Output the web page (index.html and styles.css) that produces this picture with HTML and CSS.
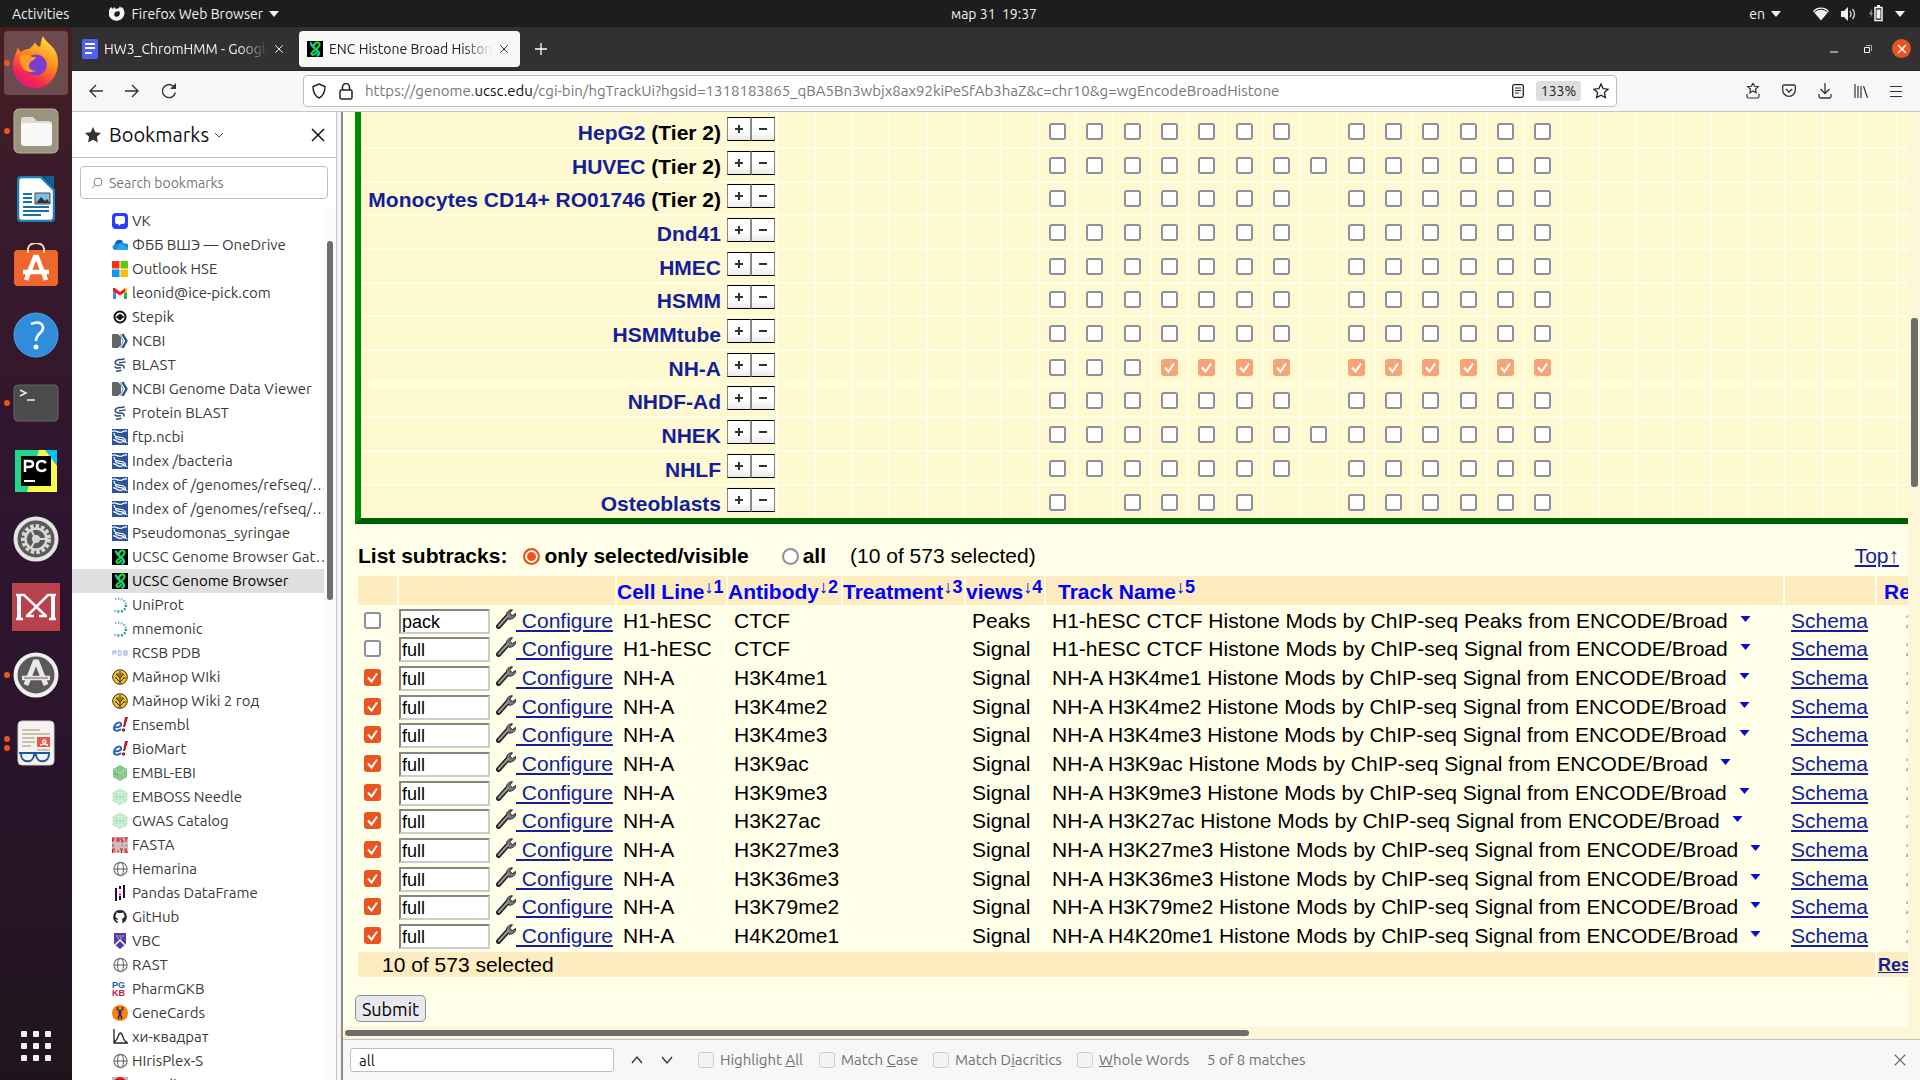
FILE: index.html
```html
<!DOCTYPE html>
<html lang="en">
<head>
<meta charset="utf-8">
<title>ENC Histone Broad Histone</title>
<link rel="stylesheet" href="styles.css">
</head>
<body>
<svg class="sprite" aria-hidden="true">
  <symbol id="i-x" viewBox="0 0 16 16"><path d="M2 2 14 14M14 2 2 14" fill="none" stroke="currentColor" stroke-width="1.5"/></symbol>
  <symbol id="i-caret" viewBox="0 0 10 6"><path d="M0 0h10L5 6z" fill="currentColor"/></symbol>
  <symbol id="i-wrench" viewBox="0 0 20 20"><path d="M2.500 17.500 11 8" stroke="#222" stroke-width="5" stroke-linecap="round"/><path d="M16.500 0.800C12.500 0.500 9.500 4 10.800 7.300L13 10.200C16.500 10.500 20 8 19.600 4.500L16.400 6.600 13.700 4.200z" fill="#777" stroke="#222"/><path d="M2.800 17 12 7" stroke="#999" stroke-width="2" stroke-linecap="round"/></symbol>
  <symbol id="f-vk" viewBox="0 0 16 16"><rect width="16" height="16" rx="4" fill="#2a3cff"/><path d="M5 3h6a2 2 0 0 1 2 2v4a2 2 0 0 1-2 2H9l-2 2-1-2H5a2 2 0 0 1-2-2V5a2 2 0 0 1 2-2z" fill="#fff"/></symbol>
  <symbol id="f-onedrive" viewBox="0 0 16 16"><path d="M3 12a3 3 0 0 1 0-5 4.500 4.500 0 0 1 8-2.500L8 10z" fill="#0a5fc4"/><path d="M1 8.500 9 6a4 4 0 0 1 4 .5A3 3 0 0 1 14 13H3A3 3 0 0 1 1 8.500z" fill="#1490df"/><path d="M8 6l7 4.500A2.500 2.500 0 0 1 13 13H4z" fill="#28a8ea"/></symbol>
  <symbol id="f-ms" viewBox="0 0 16 16"><path d="M0 0h7.500v7.500H0z" fill="#f9320c"/><path d="M8.500 0H16v7.500H8.500z" fill="#61c410"/><path d="M0 8.500h7.500V16H0z" fill="#0a96f5"/><path d="M8.500 8.500H16V16H8.500z" fill="#fdbb0a"/></symbol>
  <symbol id="f-gmail" viewBox="0 0 16 16"><path d="M1 4h3v10H1z" fill="#4285f4"/><path d="M12 4h3v10h-3z" fill="#34a853"/><path d="M12 4l3-1v4l-3 2z" fill="#fbbc04"/><path d="M1 3h2l5 4 5-4v4L8 10.500 1 6z" fill="#ea1f1f"/></symbol>
  <symbol id="f-stepik" viewBox="0 0 16 16"><circle cx="8" cy="8" r="5.500" fill="none" stroke="#111" stroke-width="2"/><path d="M5 9c0-3 3-1 3-4M8 11c0-3 3-1 3-4M6 10l4-4" fill="none" stroke="#111" stroke-width="1.800"/></symbol>
  <symbol id="f-ncbi" viewBox="0 0 16 16"><path d="M0 2q0-1 1-1h5l3 3v8l-3 3H1q-1 0-1-1z" fill="#62666b"/><path d="M8.500 1 11 8 8.500 15" fill="none" stroke="#8a8d91"/><path d="M10.500 1 14.500 8 10.500 15" fill="none" stroke="#205493" stroke-width="2.400"/></symbol>
  <symbol id="f-blast" viewBox="0 0 16 16"><path d="M12.500 1.500C10 4 7.500 1 4.500 3.500S4 8 7.500 8s5 .5 4.500 3.500" fill="none" stroke="#2f4c78" stroke-width="1.600"/><path d="M13.500 5.500C11.500 4 9.500 6.500 7 5.500M2.500 9.500C4 12.500 7 10 9 11M4 14.500c2-.5 3-1.500 5.500-1" fill="none" stroke="#2f4c78" stroke-width="1.500"/></symbol>
  <symbol id="f-ftp" viewBox="0 0 16 16"><rect width="16" height="16" fill="#2a569a"/><path d="M0 2.500C4 0 6 5 10 3s4-1 5-1M2 4c0 5 5 3.500 8 4.500s4 3 3 5M1 11c3-1 5 4 9 2 2-.8 4 0 5 .8M3 8c2 4 6 1 9 4" fill="none" stroke="#fff" stroke-width="1.300"/></symbol>
  <symbol id="f-ucsc" viewBox="0 0 16 16"><rect width="16" height="16" fill="#000"/><path d="M4.500 1.500C2 5 12 8.500 12 12c0 1.500-1 2.500-2.500 3" fill="none" stroke="#14c8b4" stroke-width="2.400"/><path d="M6 5.500C7 4 8 1 11 1.500c2.500.5 1.500 4-1 6S4.500 11 4.500 12.500 7 15.500 10 10.500" fill="none" stroke="#1ed43c" stroke-width="2.200"/></symbol>
  <symbol id="f-uniprot" viewBox="0 0 16 16"><path d="M3 2.500c4-2 10 0 11 5.500" fill="none" stroke="#7aa3b5" stroke-width="2" stroke-dasharray="1.500 1.500"/><path d="M14 8c0 4-3 7-7 6.500S3 13.500 3 13.500" fill="none" stroke="#3a9aac" stroke-width="2.500" stroke-dasharray="2 1.500"/></symbol>
  <symbol id="f-pdb" viewBox="0 0 16 16"><path d="M1 10V6h3v2H1M6.500 6h2l1 2-1 2h-2zM12 6h3v4h-3zM12 8h3" fill="none" stroke="#a9c6ec" stroke-width="1.300"/></symbol>
  <symbol id="f-wiki" viewBox="0 0 16 16"><circle cx="8" cy="8" r="7.300" fill="#eec02a" stroke="#3a3020"/><path d="M8 2v13M8 13 4 9M8 13l4-4M8 9 4 5M8 9l4-4M5 9H3M11 9h3M6 7V4M10 7V4" stroke="#3a3020" fill="none"/></symbol>
  <symbol id="f-ensembl" viewBox="0 0 16 16"><path d="M2 10c4 1 8-1 7-3.500S3 6 2 10s4 5 7 2" fill="none" stroke="#3366b5" stroke-width="2"/><path d="M13 0h3l-3 10h-2z" fill="#b81818"/><circle cx="11.500" cy="13" r="1.700" fill="#b81818"/></symbol>
  <symbol id="f-ebi" viewBox="0 0 16 16"><path d="M8 0 15 4v8l-7 4-7-4V4z" fill="#7ec489"/><path d="M8 0v16M1 4l14 8M15 4 1 12M4.500 2v12M11.500 2v12" stroke="#a6dcae" stroke-width=".7"/><path d="M4 9h2v1H4z" fill="#e55"/></symbol>
  <symbol id="f-ebi2" viewBox="0 0 16 16"><path d="M8 0 15 4v8l-7 4-7-4V4z" fill="#d4f0d8"/><path d="M8 0 15 4v8l-7 4-7-4V4zM8 0v16M1 4l14 8M15 4 1 12M4.500 2v12M11.500 2v12M1 8h14" fill="none" stroke="#98dba4" stroke-width="1" stroke-dasharray="1 1"/></symbol>
  <symbol id="f-fasta" viewBox="0 0 16 16"><rect width="16" height="16" fill="#c4c0c0"/><path d="M.5 5V1H3M1 3h2M5 5V1h2v4M5 3h2M11 1H9v2h2v2H9M12 1h4M14 1v4M1 7v3M10 8v1M14 8v1M.5 16v-4H3M1 14h2M5 14h2M8 12h3M9.500 12v4M15 12h-2v2h2v1.500h-2" stroke="#e81010" fill="none"/></symbol>
  <symbol id="f-globe" viewBox="0 0 16 16"><g fill="none" stroke="#717171" stroke-width="1.200"><circle cx="8.500" cy="8" r="6.600"/><ellipse cx="8.500" cy="8" rx="3" ry="6.600"/><path d="M2 8h13"/></g></symbol>
  <symbol id="f-pandas" viewBox="0 0 16 16"><path d="M4 3v13M12 0v13M8 1v3M8 11v4" stroke="#1a0b58" stroke-width="2"/><path d="M7 5.500h2v2H7z" fill="#fbc90a"/><path d="M7 8.500h2v2H7z" fill="#e5178c"/></symbol>
  <symbol id="f-github" viewBox="0 0 16 16"><path d="M8 1a6.800 6.800 0 0 0-2.300 13.200v-2.300C4 12 4 10.500 3.300 10c1-.2 1.500 1 2.500.8l.5-1C3 9 3 6 4.500 5V3.200L6.300 4h3.500l1.700-.8V5c1.500 1 1.500 4-1.700 4.800l.5 1v3.400A6.800 6.800 0 0 0 8 1z" fill="#24292e"/></symbol>
  <symbol id="f-vbc" viewBox="0 0 16 16"><path d="M2 0h12v11l-6 5-6-5z" fill="#5a3aa8"/><path d="M3 12 8 7l5 5" fill="none" stroke="#fff" stroke-width="1.500"/><path d="M4 3h8M5 5h6" stroke="#c8b8ea" stroke-dasharray="2 1"/></symbol>
  <symbol id="f-gene" viewBox="0 0 16 16"><circle cx="8" cy="8" r="8" fill="#f6820c"/><path d="M6 2c-3 3 4 4 3 6s-4 4-2 6M10 2c3 3-4 4-3 6s4 4 2 6" fill="none" stroke="#2a2a68" stroke-width="1.500"/></symbol>
  <symbol id="f-chi" viewBox="0 0 16 16"><path d="M2 0v14h14M2 13C6 12 6 4 8.500 4S11 13 15 13" fill="none" stroke="#222" stroke-width="1.300"/></symbol>
  <symbol id="f-snp" viewBox="0 0 16 16"><rect width="16" height="16" fill="#bbb"/><circle cx="8" cy="6" r="6" fill="#e81010"/></symbol>
</svg>

<header class="topbar">
  <div class="topbar-left">
    <button type="button">Activities</button>
    <button type="button" class="app-menu">
      <svg width="16" height="16" viewBox="0 0 16 16"><path d="M2 1l2 2 1-2 2 2 3-1 1-2 1 2 1-1a8 8 0 1 1-13 3z" fill="#f2f2f2"/><path d="M6 6l4-1 1 2-1 3-3 1-2-2z" fill="#1d1d1d"/></svg>
      Firefox Web Browser
      <svg width="10" height="6"><use href="#i-caret"/></svg>
    </button>
  </div>
  <button type="button" class="clock">мар 31&nbsp; 19:37</button>
  <div class="topbar-right">
    <button type="button">en <svg width="10" height="6"><use href="#i-caret"/></svg></button>
    <svg class="t-wifi" width="16" height="14" viewBox="0 0 16 14"><path d="M0 4a11 11 0 0 1 16 0L8 13.500z" fill="#f2f2f2"/><path d="M1.500 4.800a9.500 9.500 0 0 1 13 0" fill="none" stroke="#1d1d1d" stroke-width="1"/></svg>
    <svg width="16" height="14" viewBox="0 0 16 14"><path d="M0 4h3l4-4v14l-4-4H0z" fill="#f2f2f2"/><path d="M9 4q2 3 0 6M11.500 2q4 5 0 10" fill="none" stroke="#ccc" stroke-width="1.400"/></svg>
    <svg width="14" height="17" viewBox="0 0 14 17"><path d="M3 4 0 9h2L1 13l3-5H2.500z" fill="#999"/><path d="M6 2.500h7v13H6z" fill="none" stroke="#f2f2f2" stroke-width="1.500"/><path d="M8 0h3v2H8zM7.500 4.500h4v9h-4z" fill="#f2f2f2"/></svg>
    <svg width="10" height="6"><use href="#i-caret"/></svg>
  </div>
</header>

<div class="desktop">
<nav class="dock" aria-label="Dock">
  <a href="#" class="tile current one" aria-label="Firefox"><svg width="48" height="60" viewBox="0 0 48 60"><defs><linearGradient id="ff" x1=".8" y1="0" x2=".3" y2="1"><stop offset="0" stop-color="#ffe43a"/><stop offset=".45" stop-color="#ff8a1c"/><stop offset=".8" stop-color="#f8274e"/><stop offset="1" stop-color="#e3148c"/></linearGradient></defs><path d="M6 14c1 3 2 4 3 5 2-2 5-3 8-3 3-2 5-5 6-7 1 3 3 4 5 5 1-3 1-8 3-11 3 7 11 9 14 19 4 14-4 32-20 33C11 56 1 45 1 33 1 26 4 20 6 14z" fill="url(#ff)"/><path d="M15 25c4-4 12-5 16-1 5 4 5 12 0 16-5 4-13 3-16-2z" fill="#7b3fd0"/><path d="M8 23c5-3 9-1 12 1l4 0c-1 4-5 3-6 6-3 3 0 8 6 8-10 4-17-4-16-15z" fill="#ff9a25"/></svg></a>
  <a href="#" class="tile one" aria-label="Files"><svg width="46" height="46" viewBox="0 0 46 46"><rect x="1" y="1" width="44" height="44" rx="5" fill="#9a947f" stroke="#b8b2a0"/><path d="M8 12q0-3 3-3h9l4 4h12q3 0 3 3v6H8z" fill="#dedacd"/><rect x="8" y="15" width="31" height="23" rx="3" fill="#faf9f7"/></svg></a>
  <a href="#" class="tile" aria-label="LibreOffice Writer"><svg width="38" height="46" viewBox="0 0 38 46"><path d="M5 1h19l13 13v27q0 4-4 4H5q-4 0-4-4V5q0-4 4-4z" fill="#fff" stroke="#1a82b8" stroke-width="2.500"/><path d="M26 0h11v12z" fill="#0f5f90"/><path d="M6 18h9M6 22h9M6 26h9M6 31h26M6 35h26M6 39h18" stroke="#1a6fa8" stroke-width="1.800"/><path d="M18 17h15v11H18z" fill="#7ac0e8" stroke="#444"/><path d="M19 27l5-6 4 4 2-2 3 4z" fill="#333"/></svg></a>
  <a href="#" class="tile" aria-label="Ubuntu Software"><svg width="46" height="48" viewBox="0 0 46 48"><rect x="1" y="7" width="44" height="36" rx="4" fill="#f0672e"/><path d="M15 10V6a8 6 0 0 1 16 0v4" fill="none" stroke="#f6dcb8" stroke-width="2"/><path d="M13 37 22 14h2l9 23M10 29h26" fill="none" stroke="#fff" stroke-width="4.500"/></svg></a>
  <a href="#" class="tile" aria-label="Help"><svg width="46" height="46" viewBox="0 0 46 46"><circle cx="23" cy="23" r="22" fill="#2f8ddb" stroke="#4fa3e4"/><path d="M18 12q10-4 12 3c1 6-7 6-7 14" fill="none" stroke="#fff" stroke-width="2.600"/><circle cx="23" cy="35" r="2.500" fill="#fff"/></svg></a>
  <a href="#" class="tile one" aria-label="Terminal"><svg width="46" height="38" viewBox="0 0 46 38"><rect x="1" y="1" width="44" height="36" rx="4" fill="#4b4b4b" stroke="#666"/><path d="M7 6l6 3-6 3M14 16h8" fill="none" stroke="#eee" stroke-width="1.600"/></svg></a>
  <a href="#" class="tile" aria-label="PyCharm"><svg width="42" height="42" viewBox="0 0 42 42"><rect width="42" height="42" fill="#21d789"/><path d="M24 0h18v20z" fill="#07c3f2"/><path d="M24 0h6l12 16v26H12z" fill="#fcf84a"/><path d="M6 6h30v30H6z" fill="#000"/><path d="M10 22V11h4q4 0 4 3t-4 3h-4M31 13q-2-2-4-2-5 0-5 5t5 5q2 0 4-2" fill="none" stroke="#fff" stroke-width="2.500"/><path d="M9 31h11" stroke="#fff" stroke-width="2"/></svg></a>
  <a href="#" class="tile" aria-label="Settings"><svg width="46" height="46" viewBox="0 0 46 46"><circle cx="23" cy="23" r="20.500" fill="#5a5a58" stroke="#e4e4e2" stroke-width="4"/><circle cx="23" cy="23" r="13" fill="none" stroke="#d8d8d6" stroke-width="4" stroke-dasharray="3.500 2"/><circle cx="23" cy="23" r="10.500" fill="none" stroke="#d8d8d6" stroke-width="2.500"/><circle cx="23" cy="23" r="4" fill="#d8d8d6"/><path d="M23 23h10M23 23l-5-9M23 23l-5 9" stroke="#d8d8d6" stroke-width="2"/></svg></a>
  <a href="#" class="tile" aria-label="MEGA"><svg width="48" height="48" viewBox="0 0 48 48"><rect width="48" height="48" fill="#b9414d"/><path d="M7 12v24M41 12v24" stroke="#fff" stroke-width="4"/><path d="M4 12h8l22 21M4 36h7M37 36h7M44 12h-8L15 33M14 33h8M27 33h8" fill="none" stroke="#fff" stroke-width="2.500"/></svg></a>
  <a href="#" class="tile one" aria-label="Software Updater"><svg width="46" height="46" viewBox="0 0 46 46"><circle cx="23" cy="23" r="20.500" fill="#5a5a58" stroke="#efefed" stroke-width="4"/><path d="M13 33 22 10h2l9 23" fill="none" stroke="#e8e8e6" stroke-width="5"/><path d="M9 26h28" stroke="#e8e8e6" stroke-width="4.500"/><path d="M11 26h24" stroke="#8b4a80"/></svg></a>
  <a href="#" class="tile two" aria-label="Document Viewer"><svg width="38" height="46" viewBox="0 0 38 46"><rect x="1" y="1" width="36" height="44" rx="4" fill="#f4f3f0" stroke="#d0cec8"/><path d="M5 10h18M5 14h28M5 18h13M5 22h13M5 26h9M20 30h13" stroke="#b9b09a" stroke-width="1.600"/><path d="M20 17h13v10H20z" fill="#e8574a"/><path d="M23 25c4 0 8-4 5-5s-4 4 3 5" fill="none" stroke="#fff" stroke-width="1.300"/><path d="M2 33h31M4 34c0 9 12 10 13 1h2c1 9 13 8 13-1" fill="none" stroke="#1d5a9c" stroke-width="2"/></svg></a>
  <a href="#" class="tile apps" aria-label="Show Applications"><svg width="30" height="30" viewBox="0 0 30 30" fill="#f3f3f3"><rect width="6" height="6" rx="1"/><rect x="12" width="6" height="6" rx="1"/><rect x="24" width="6" height="6" rx="1"/><rect y="12" width="6" height="6" rx="1"/><rect x="12" y="12" width="6" height="6" rx="1"/><rect x="24" y="12" width="6" height="6" rx="1"/><rect y="24" width="6" height="6" rx="1"/><rect x="12" y="24" width="6" height="6" rx="1"/><rect x="24" y="24" width="6" height="6" rx="1"/></svg></a>
</nav>

<div class="window">
  <div class="tabs">
    <div class="tab">
      <svg width="16" height="20" viewBox="0 0 16 20"><rect width="16" height="20" rx="2" fill="#4a63f2"/><path d="M3 5h10M3 9h10M3 14h7" stroke="#fff" stroke-width="1.800"/></svg>
      <a href="#" class="tab-title">HW3_ChromHMM - Google</a>
      <button type="button" aria-label="Close tab"><svg width="10" height="10"><use href="#i-x"/></svg></button>
    </div>
    <div class="tab active">
      <svg width="16" height="16"><use href="#f-ucsc"/></svg>
      <a href="#" class="tab-title">ENC Histone Broad Histone</a>
      <button type="button" aria-label="Close tab"><svg width="10" height="10"><use href="#i-x"/></svg></button>
    </div>
    <button type="button" class="newtab" aria-label="New tab"><svg width="12" height="12" viewBox="0 0 12 12"><path d="M6 0v12M0 6h12" stroke="#fff" stroke-width="1.300"/></svg></button>
    <div class="wincontrols">
      <button type="button" aria-label="Minimize"><svg width="8" height="8" viewBox="0 0 8 8"><path d="M0 7h8" stroke="#fff"/></svg></button>
      <button type="button" aria-label="Restore"><svg width="8" height="8" viewBox="0 0 8 8"><path d="M.5 2.500h5v5h-5z" fill="none" stroke="#fff"/><path d="M2 .5h5.500V6" fill="none" stroke="#aaa"/></svg></button>
      <button type="button" class="close" aria-label="Close"><svg width="10" height="10" viewBox="0 0 10 10"><path d="M1 1l8 8M9 1 1 9" stroke="#fff" stroke-width="1.500"/></svg></button>
    </div>
  </div>

  <div class="toolbar">
    <div class="nav-buttons">
      <button type="button" aria-label="Back"><svg width="14" height="14" viewBox="0 0 14 14"><path d="M14 7H1M7 1 1 7l6 6" fill="none" stroke="#333" stroke-width="1.400"/></svg></button>
      <button type="button" aria-label="Forward"><svg width="14" height="14" viewBox="0 0 14 14"><path d="M0 7h13M7 1l6 6-6 6" fill="none" stroke="#333" stroke-width="1.400"/></svg></button>
      <button type="button" aria-label="Reload"><svg width="16" height="16" viewBox="0 0 16 16"><path d="M14.300 9.500A6.500 6.500 0 1 1 12 3l2 2" fill="none" stroke="#333" stroke-width="1.400"/><path d="M15 0v6H9z" fill="#333"/></svg></button>
    </div>
    <div class="urlbar">
      <svg width="16" height="16" viewBox="0 0 16 16"><path d="M8 1l6 2.500C14 9 12 13 8 15 4 13 2 9 2 3.500z" fill="none" stroke="#222" stroke-width="1.400"/></svg>
      <svg width="14" height="17" viewBox="0 0 14 17"><rect x="1" y="7" width="12" height="9" rx="1.500" fill="none" stroke="#222" stroke-width="1.500"/><path d="M3.500 7V4a3.500 3.500 0 0 1 7 0v3" fill="none" stroke="#222" stroke-width="1.500"/></svg>
      <a href="#" class="url">https://genome.<b>ucsc.edu</b>/cgi-bin/hgTrackUi?hgsid=1318183865_qBA5Bn3wbjx8ax92kiPeSfAb3haZ&amp;c=chr10&amp;g=wgEncodeBroadHistone</a>
      <button type="button" aria-label="Reader view"><svg width="12" height="14" viewBox="0 0 12 14"><rect x=".7" y=".7" width="10.600" height="12.600" rx="1.500" fill="none" stroke="#222" stroke-width="1.300"/><path d="M3 4h6M3 6.500h6M3 9h4" stroke="#222"/></svg></button>
      <button type="button" class="zoom">133%</button>
      <button type="button" aria-label="Bookmark this page"><svg width="16" height="16" viewBox="0 0 16 16"><path d="M8 1l2.100 4.600 4.900.6-3.600 3.400 1 5L8 12.200 3.600 14.600l1-5L1 6.200l4.900-.6z" fill="none" stroke="#222" stroke-width="1.300"/></svg></button>
    </div>
    <div class="tools">
      <button type="button" aria-label="Bookmarks menu"><svg width="14" height="16" viewBox="0 0 14 16"><path d="M7 0l1.600 3.300 3.600.4-2.700 2.500.7 3.600L7 8 3.800 9.800l.7-3.600L1.800 3.700l3.600-.4zM1 11v2.500q0 1.500 1.500 1.500h9q1.500 0 1.500-1.500V11" fill="none" stroke="#333" stroke-width="1.200"/></svg></button>
      <button type="button" aria-label="Pocket"><svg width="14" height="14" viewBox="0 0 14 14"><path d="M2 1h10q1.300 0 1.300 1.300V6a6.300 6.300 0 0 1-12.600 0V2.300Q.7 1 2 1zM3.800 5 7 8l3.200-3" fill="none" stroke="#333" stroke-width="1.300"/></svg></button>
      <button type="button" aria-label="Downloads"><svg width="14" height="16" viewBox="0 0 14 16"><path d="M7 0v10M2.500 6 7 10.500 11.500 6M1 11v2.500q0 1.500 1.500 1.500h9q1.500 0 1.500-1.500V11" fill="none" stroke="#333" stroke-width="1.300"/></svg></button>
      <button type="button" aria-label="Library"><svg width="14" height="14" viewBox="0 0 14 14"><path d="M1 0v14M4 2v12M7 2v12M9.500 2l4 12" fill="none" stroke="#333" stroke-width="1.200"/></svg></button>
      <button type="button" aria-label="Menu"><svg width="12" height="12" viewBox="0 0 12 12"><path d="M0 1.500h12M0 6.500h12M0 11.500h12" stroke="#333"/></svg></button>
    </div>
  </div>

  <div class="body">
  <aside class="sidebar">
    <div class="side-head">
      <svg width="16" height="16" viewBox="0 0 16 16"><path d="M8 0l2.400 5.200 5.600.7-4.100 3.900 1 5.700L8 12.800l-4.900 2.700 1-5.700L0 5.900l5.600-.7z" fill="#333"/></svg>
      <button type="button" class="side-title">Bookmarks <svg width="8" height="6" viewBox="0 0 8 6"><path d="M0 1l4 4 4-4" fill="none" stroke="#444"/></svg></button>
      <button type="button" aria-label="Close sidebar"><svg width="16" height="16"><use href="#i-x"/></svg></button>
    </div>
    <label class="search">
      <svg width="12" height="12" viewBox="0 0 12 12"><circle cx="7" cy="5" r="4" fill="none" stroke="#888"/><path d="M4 8 1 11.500" stroke="#888"/></svg>
      <input type="search" placeholder="Search bookmarks" aria-label="Search bookmarks">
    </label>
    <div class="side-scroll">
    <ul class="bookmarks">
      <li><svg><use href="#f-vk"/></svg><a href="#">VK</a></li>
      <li><svg><use href="#f-onedrive"/></svg><a href="#">ФББ ВШЭ — OneDrive</a></li>
      <li><svg><use href="#f-ms"/></svg><a href="#">Outlook HSE</a></li>
      <li><svg><use href="#f-gmail"/></svg><a href="#">leonid@ice-pick.com</a></li>
      <li><svg><use href="#f-stepik"/></svg><a href="#">Stepik</a></li>
      <li><svg><use href="#f-ncbi"/></svg><a href="#">NCBI</a></li>
      <li><svg><use href="#f-blast"/></svg><a href="#">BLAST</a></li>
      <li><svg><use href="#f-ncbi"/></svg><a href="#">NCBI Genome Data Viewer</a></li>
      <li><svg><use href="#f-blast"/></svg><a href="#">Protein BLAST</a></li>
      <li><svg><use href="#f-ftp"/></svg><a href="#">ftp.ncbi</a></li>
      <li><svg><use href="#f-ftp"/></svg><a href="#">Index /bacteria</a></li>
      <li><svg><use href="#f-ftp"/></svg><a href="#">Index of /genomes/refseq/…</a></li>
      <li><svg><use href="#f-ftp"/></svg><a href="#">Index of /genomes/refseq/…</a></li>
      <li><svg><use href="#f-ftp"/></svg><a href="#">Pseudomonas_syringae</a></li>
      <li><svg><use href="#f-ucsc"/></svg><a href="#">UCSC Genome Browser Gat…</a></li>
      <li class="selected"><svg><use href="#f-ucsc"/></svg><a href="#">UCSC Genome Browser</a></li>
      <li><svg><use href="#f-uniprot"/></svg><a href="#">UniProt</a></li>
      <li><svg><use href="#f-uniprot"/></svg><a href="#">mnemonic</a></li>
      <li><svg><use href="#f-pdb"/></svg><a href="#">RCSB PDB</a></li>
      <li><svg><use href="#f-wiki"/></svg><a href="#">Майнор WIki</a></li>
      <li><svg><use href="#f-wiki"/></svg><a href="#">Майнор Wiki 2 год</a></li>
      <li><svg><use href="#f-ensembl"/></svg><a href="#">Ensembl</a></li>
      <li><svg><use href="#f-ensembl"/></svg><a href="#">BioMart</a></li>
      <li><svg><use href="#f-ebi"/></svg><a href="#">EMBL-EBI</a></li>
      <li><svg><use href="#f-ebi2"/></svg><a href="#">EMBOSS Needle</a></li>
      <li><svg><use href="#f-ebi2"/></svg><a href="#">GWAS Catalog</a></li>
      <li><svg><use href="#f-fasta"/></svg><a href="#">FASTA</a></li>
      <li><svg><use href="#f-globe"/></svg><a href="#">Hemarina</a></li>
      <li><svg><use href="#f-pandas"/></svg><a href="#">Pandas DataFrame</a></li>
      <li><svg><use href="#f-github"/></svg><a href="#">GitHub</a></li>
      <li><svg><use href="#f-vbc"/></svg><a href="#">VBC</a></li>
      <li><svg><use href="#f-globe"/></svg><a href="#">RAST</a></li>
      <li><span class="pgkb"><i>PG</i><i>KB</i></span><a href="#">PharmGKB</a></li>
      <li><svg><use href="#f-gene"/></svg><a href="#">GeneCards</a></li>
      <li><svg><use href="#f-chi"/></svg><a href="#">хи-квадрат</a></li>
      <li><svg><use href="#f-globe"/></svg><a href="#">HIrisPlex-S</a></li>
      <li><svg><use href="#f-snp"/></svg><a href="#">snpedia</a></li>
    </ul>
    <div class="side-bar"><div class="thumb"></div></div>
    </div>
  </aside>
  <div class="splitter"></div>

  <main class="main">
    <div class="view">
      <div class="page">
        <table class="matrix" id="matrix"></table>

        <div class="list-head">
          <b>List subtracks:</b>
          <label class="opt-visible"><input type="radio" name="show" checked><b>only selected/visible</b></label>
          <label class="opt-all"><input type="radio" name="show"><b>all</b></label>
          <span>(10 of 573 selected)</span>
          <a href="#" class="top">Top↑</a>
        </div>

        <table class="subtracks">
          <colgroup><col class="c1"><col class="c2"><col class="c3"><col class="c4"><col class="c5"><col class="c6"><col class="c7"><col class="c8"><col class="c9"></colgroup>
          <thead>
            <tr><th></th><th></th><th>Cell Line<sup>↓1</sup></th><th>Antibody<sup>↓2</sup></th><th>Treatment<sup>↓3</sup></th><th>views<sup>↓4</sup></th><th class="track">Track Name<sup>↓5</sup></th><th></th><th class="restrict">Re</th></tr>
          </thead>
          <tbody id="subtracks"></tbody>
          <tfoot>
            <tr><td colspan="8">10 of 573 selected</td><td class="res"><a href="#">Res</a></td></tr>
          </tfoot>
        </table>
        <button type="button" class="submit">Submit</button>
      </div>
      <div class="vbar"><div class="thumb"></div></div>
    </div>
    <div class="hbar"><div class="thumb"></div></div>
    <form class="findbar">
      <input type="text" value="all" aria-label="Find in page">
      <button type="button" aria-label="Previous"><svg width="12" height="8" viewBox="0 0 12 8"><path d="M1 7l5-6 5 6" fill="none" stroke="#333" stroke-width="1.300"/></svg></button>
      <button type="button" aria-label="Next"><svg width="12" height="8" viewBox="0 0 12 8"><path d="M1 1l5 6 5-6" fill="none" stroke="#333" stroke-width="1.300"/></svg></button>
      <label class="w1"><input type="checkbox"><span>Highlight <u>A</u>ll</span></label>
      <label class="w2"><input type="checkbox"><span>Match <u>C</u>ase</span></label>
      <label class="w3"><input type="checkbox"><span>Match D<u>i</u>acritics</span></label>
      <label class="w4"><input type="checkbox"><span><u>W</u>hole Words</span></label>
      <span>5 of 8 matches</span>
      <button type="button" class="find-close" aria-label="Close find bar"><svg width="14" height="14"><use href="#i-x"/></svg></button>
    </form>
  </main>
  </div>
</div>
</div>
<script src="script.js"></script>
</body>
</html>
```
FILE: styles.css
```css
* { box-sizing: border-box; }
html, body { height: 100%; }
body {
  margin: 0;
  display: flex;
  flex-direction: column;
  overflow: hidden;
  font: 15px/20px Ubuntu, "Noto Sans", sans-serif;
  color: #222;
  background: #1d1d1d;
}
button { border: 0; padding: 0; background: none; font: inherit; color: inherit; white-space: nowrap; }
svg { display: block; flex: none; }
.sprite { position: absolute; width: 0; height: 0; }
b { font-weight: 700; }

/* desktop panel */
.topbar {
  flex: none;
  height: 27px;
  display: grid;
  grid-template-columns: 951px 1fr auto;
  align-items: center;
  color: #f2f2f2;
  font-size: 14px;
}
.topbar-left { display: flex; gap: 40px; padding-left: 12px; }
.app-menu { display: flex; align-items: center; gap: 6px; }
.clock { justify-self: start; }
.topbar-right { display: flex; align-items: center; gap: 12px; padding-right: 15px; }
.topbar-right button { display: flex; align-items: center; gap: 6px; }
.t-wifi { margin-left: 20px; }

.desktop { flex: 1; min-height: 0; display: flex; }
.dock {
  flex: none;
  width: 72px;
  display: flex;
  flex-direction: column;
  align-items: center;
  gap: 4px;
  padding: 4px 0 2px;
  background: linear-gradient(#481e22, #3a1b2a 15%, #2e1530 45%, #2a142b 70%, #20141c);
}
.tile {
  position: relative;
  width: 64px;
  height: 64px;
  flex: none;
  display: grid;
  place-items: center;
  border-radius: 4px;
}
.current { background: #6d4a4e; }
.one::before, .two::before, .two::after {
  content: "";
  position: absolute;
  left: 0;
  top: 29px;
  width: 6px;
  height: 6px;
  border-radius: 50%;
  background: #e95420;
}
.two::before { top: 25px; }
.two::after { top: 34px; }
.apps { margin-top: auto; }

/* browser chrome */
.window { flex: 1; min-width: 0; display: flex; flex-direction: column; background: #f7f7f7; }
.tabs {
  flex: none;
  height: 44px;
  display: flex;
  align-items: center;
  padding: 0 9px 0 2px;
  background: #333033;
  border-bottom: 1px solid #232123;
  color: #f5f5f5;
}
.tab { width: 221px; height: 36px; padding: 0 11px 0 8px; margin-right: 4px; display: flex; align-items: center; gap: 6px; border-radius: 4px; }
.tab.active { background: #f8f8f8; color: #222; }
.tab-title {
  flex: 1;
  min-width: 0;
  overflow: hidden;
  white-space: nowrap;
  font-size: 14px;
  color: inherit;
  text-decoration: none;
  -webkit-mask-image: linear-gradient(90deg, #000 82%, transparent);
  mask-image: linear-gradient(90deg, #000 82%, transparent);
}
.newtab { margin-left: 11px; }
.wincontrols { margin-left: auto; display: flex; align-items: center; gap: 26px; }
.close { width: 19px; height: 19px; margin-left: -6px; border-radius: 50%; background: #e95420; display: grid; place-items: center; }

.toolbar {
  flex: none;
  height: 41px;
  display: flex;
  align-items: center;
  border-bottom: 1px solid #c4c4c4;
}
.nav-buttons { width: 231px; padding-left: 17px; display: flex; align-items: center; gap: 22px; flex: none; }
.urlbar {
  flex: 1;
  min-width: 0;
  height: 32px;
  padding: 0 7px;
  display: flex;
  align-items: center;
  gap: 12px;
  background: #fff;
  border: 1px solid #bdbdbd;
  border-radius: 4px;
}
.url { flex: 1; min-width: 0; overflow: hidden; white-space: nowrap; color: #777; text-decoration: none; }
.url b { font-weight: 400; color: #111; }
.zoom { width: 45px; height: 20px; border-radius: 3px; background: #dedede; font-size: 14px; color: #222; }
.tools { width: 303px; flex: none; padding-right: 18px; display: flex; align-items: center; justify-content: flex-end; gap: 22px; }

/* bookmarks sidebar */
.body { flex: 1; min-height: 0; display: flex; }
.sidebar { flex: none; width: 265px; display: flex; flex-direction: column; background: #fff; border-right: 1px solid #c4c4c4; }
.side-head { flex: none; height: 46px; padding: 0 10px 0 13px; display: flex; align-items: center; gap: 8px; border-bottom: 1px solid #c4c4c4; color: #111; }
.side-title { flex: 1; display: flex; align-items: center; gap: 6px; font-size: 20px; }
.search { flex: none; height: 33px; margin: 8px 8px 10px; padding: 0 10px; display: flex; align-items: center; gap: 6px; border: 1px solid #bdbdbd; border-radius: 4px; font-size: 14px; }
.search input { flex: 1; min-width: 0; border: 0; padding: 0; font: inherit; outline: 0; background: none; }
.search input::placeholder { color: #777; opacity: 1; }
.side-scroll { flex: 1; min-height: 0; display: flex; overflow: hidden; }
.bookmarks { flex: 1; min-width: 0; margin: 0; padding: 0; list-style: none; }
.bookmarks li { height: 24px; padding-left: 40px; display: flex; align-items: center; gap: 4px; white-space: nowrap; }
.bookmarks svg { width: 16px; height: 16px; }
.bookmarks a { color: #3a3a3a; text-decoration: none; }
.bookmarks .selected { background: #dfdfdf; }
.bookmarks .selected a { color: #000; }
.pgkb { width: 16px; height: 16px; display: grid; font: 700 9px/8px "Liberation Sans", sans-serif; color: #1d5a96; }
.pgkb i { font-style: normal; }
.pgkb i + i { color: #cc1444; }
.side-bar { width: 12px; padding: 32px 3px 0; background: #fafafa; flex: none; }
.thumb { border-radius: 3px; background: #6c6d6d; }
.side-bar .thumb { height: 359px; }
.splitter { flex: none; width: 6px; background: #f4f4f4; border-right: 2px solid #8c8c8c; }

/* page */
.main { flex: 1; min-width: 0; display: flex; flex-direction: column; }
.view { flex: 1; min-height: 0; display: flex; }
.page {
  flex: 1;
  min-width: 0;
  overflow: hidden;
  padding-left: 12px;
  background: #fffee8;
  color: #000;
  font: 21px/24px "Liberation Sans", Arial, sans-serif;
}
.page a { color: #121e9a; }
.vbar { flex: none; width: 12px; background: #fdf6d9; padding: 206px 2px 0 3px; }
.vbar .thumb { height: 169px; }
.hbar { flex: none; height: 12px; background: #fdf6d9; padding: 3px 0 0 2px; }
.hbar .thumb { width: 57.4%; height: 6px; }

input[type="checkbox"], input[type="radio"] {
  appearance: none;
  flex: none;
  width: 17px;
  height: 17px;
  margin: 0;
  background: #fff;
  border: 2px solid #8f8f9d;
  border-radius: 3px;
}
input[type="radio"] { border-radius: 50%; }
input[type="checkbox"]:checked {
  border: 0;
  background: #e95420 url("data:image/svg+xml,%3Csvg xmlns='http://www.w3.org/2000/svg' viewBox='0 0 17 17'%3E%3Cpath d='M4 8.500l3.500 4L13 4.500' fill='none' stroke='%23fff' stroke-width='2'/%3E%3C/svg%3E");
}
input[type="radio"]:checked { border-color: #e95420; background: #e95420; box-shadow: inset 0 0 0 2px #fff; }

.matrix {
  width: 1618px;
  table-layout: fixed;
  border-spacing: 0;
  border-left: 6px solid #008c00;
  border-bottom: 6px solid #005f00;
}
.matrix th, .matrix td {
  padding: 0;
  background: #fff9d2;
  border: solid #fffee8;
  border-width: 0 2px 2px 0;
  vertical-align: middle;
}
.matrix tr { height: 34px; }
.matrix tr:nth-child(3n) { height: 33px; }
.matrix thead tr { height: 3px; }
.matrix tr:last-child > * { border-bottom-width: 0; }
.matrix thead tr > * { border-bottom-width: 2px; }
.matrix tbody tr:last-child { height: 32px; }
.matrix .col-name { width: 417px; }
.matrix .col-a { width: 38px; }
.matrix .col-b { width: 37px; }
.matrix input { display: block; margin: 0 auto; }
.matrix input:checked { background-color: #f4a577; }
.row-name { height: 31px; display: flex; align-items: flex-start; justify-content: flex-end; padding: 1px 1px 0 0; }
.row-name span { padding: 4px 6px 0 0; white-space: nowrap; }
.row-name a { text-decoration: none; }
.row-name button {
  width: 24px;
  height: 24px;
  display: grid;
  justify-content: center;
  padding-top: 7px;
  align-content: start;
  background: linear-gradient(#fff 60%, #eaeaea);
  border: 1px solid #888;
  border-color: #000 #888;
}

.list-head { height: 52px; display: flex; align-items: center; padding: 12px 9px 0 3px; white-space: nowrap; }
.list-head label { display: flex; align-items: center; gap: 4px; }
.opt-visible { margin-left: 16px; }
.opt-all { margin: 0 24px 0 33px; }
.top { margin-left: auto; }

.subtracks { width: 1619px; margin-left: 3px; table-layout: fixed; border-spacing: 0; white-space: nowrap; }
.c1 { width: 41px; } .c2 { width: 218px; } .c3 { width: 111px; } .c4 { width: 115px; } .c5 { width: 123px; }
.c6 { width: 80px; } .c7 { width: 739px; } .c8 { width: 92px; } .c9 { width: 100px; }
.subtracks th, .subtracks td { padding: 0; text-align: left; }
.subtracks th { height: 32px; background: #fcecc0; background-clip: padding-box; border: solid #fffee8; border-width: 0 2px 3px 0; color: #00f; vertical-align: bottom; line-height: 26px; }
.subtracks sup { font-size: 18px; line-height: 0; vertical-align: 6px; }
.subtracks .track { padding-left: 12px; }
.subtracks .restrict { padding-left: 7px; }
.subtracks tbody tr { height: 29px; }
.subtracks tbody tr:nth-child(3n+1) { height: 28px; }
.subtracks tbody td { line-height: 24px; padding: 1px 0 0 6px; vertical-align: top; }
.subtracks tbody td input { display: block; margin-top: 3px; }
.subtracks tbody td:nth-child(2) { padding-left: 0; }
.subtracks tbody td:last-child { padding-left: 28px; color: #aaa; }
.track-row { display: flex; align-items: center; }
.caret { color: #0b0bd8; margin: -4px 0 0 12px; }
.vis { display: flex; align-items: flex-start; }
.vis select {
  appearance: none;
  width: 91px;
  height: 25px;
  padding: 1px 2px 0 1px;
  border: 2px solid;
  border-color: #858585 #ccc #ccc #858585;
  border-radius: 0;
  background: #fff;
  color: #000;
  font: 18px/20px "Liberation Sans", Arial, sans-serif;
}
.vis a { display: flex; white-space: pre; text-decoration: none; }
.vis svg { margin-left: 6px; }
.vis span { text-decoration: underline; }
.subtracks tfoot td { height: 25px; background: #fcecc0; background-clip: padding-box; border-right: 2px solid #fffee8; padding-left: 24px; line-height: 24px; }
.subtracks tfoot .res { padding-left: 1px; font-size: 18px; font-weight: 700; }
.submit {
  display: block;
  width: 71px;
  height: 27px;
  margin-top: 18px;
  border: 1px solid #8f8f9d;
  border-radius: 5px;
  background: #e9e9ed;
  font: 18px/24px Ubuntu, "Noto Sans", sans-serif;
}

/* find bar */
.findbar {
  flex: none;
  height: 41px;
  padding: 0 13px 0 7px;
  display: flex;
  align-items: center;
  border-top: 1px solid #c4c4c4;
  color: #717171;
  white-space: nowrap;
}
.findbar > input { width: 264px; height: 24px; margin-right: 17px; padding: 0 8px; border: 1px solid #bdbdbd; border-radius: 3px; font: inherit; color: #111; background: #fff; }
.findbar button { margin-right: 18px; }
.findbar label { display: flex; align-items: center; gap: 6px; }
.findbar label input { width: 16px; height: 16px; background: #f3f3f3; border: 1px solid #cfcfcf; }
.w1 { width: 121px; margin-left: 7px; }
.w2 { width: 114px; }
.w3 { width: 144px; }
.w4 { width: 130px; }
.findbar .find-close { margin: 0 0 0 auto; }
```
FILE: script.js
```js
// Check box columns per cell line: "o" = clear box, "x" = ticked box, "." = no experiment.
const cellLines = [
  ["HepG2", "Tier 2", "ooooooo.oooooo"],
  ["HUVEC", "Tier 2", "oooooooooooooo"],
  ["Monocytes CD14+ RO01746", "Tier 2", "o.ooooo.oooooo"],
  ["Dnd41", "", "ooooooo.oooooo"],
  ["HMEC", "", "ooooooo.oooooo"],
  ["HSMM", "", "ooooooo.oooooo"],
  ["HSMMtube", "", "ooooooo.oooooo"],
  ["NH-A", "", "oooxxxx.xxxxxx"],
  ["NHDF-Ad", "", "ooooooo.oooooo"],
  ["NHEK", "", "oooooooooooooo"],
  ["NHLF", "", "ooooooo.oooooo"],
  ["Osteoblasts", "", "o.oooo..oooooo"],
];
const COLUMNS = 32, FIRST = 7;
const plus = '<svg width="8" height="8" viewBox="0 0 8 8"><path d="M4 0v8M0 4h8" stroke="#333" stroke-width="2"/></svg>';
const minus = '<svg width="8" height="8" viewBox="0 0 8 8"><path d="M0 4h8" stroke="#333" stroke-width="2"/></svg>';

let cols = '<col class="col-name">';
for (let i = 0; i < COLUMNS; i++) cols += `<col class="${i % 3 ? "col-b" : "col-a"}">`;

const rows = cellLines.map(([name, tier, boxes]) => {
  let cells = "";
  for (let i = 0; i < COLUMNS; i++) {
    const mark = boxes[i - FIRST];
    const box = mark === "o" || mark === "x"
      ? `<input type="checkbox" aria-label="${name}"${mark === "x" ? " checked" : ""}>` : "";
    cells += `<td>${box}</td>`;
  }
  return `<tr><th><div class="row-name"><span><a href="#">${name}</a>${tier ? ` (${tier})` : ""}</span>` +
    `<button type="button" aria-label="Select all">${plus}</button>` +
    `<button type="button" aria-label="Clear all">${minus}</button></div></th>${cells}</tr>`;
}).join("");
document.getElementById("matrix").innerHTML =
  `<colgroup>${cols}</colgroup><thead><tr>${"<td></td>".repeat(COLUMNS + 1)}</tr></thead><tbody>${rows}</tbody>`;

const subtracks = [
  ["H1-hESC", "CTCF", "Peaks"], ["H1-hESC", "CTCF", "Signal"],
  ...["H3K4me1", "H3K4me2", "H3K4me3", "H3K9ac", "H3K9me3", "H3K27ac", "H3K27me3", "H3K36me3", "H3K79me2", "H4K20me1"]
    .map(mark => ["NH-A", mark, "Signal"]),
];
document.getElementById("subtracks").innerHTML = subtracks.map(([cell, mark, view], i) => `<tr>
  <td><input type="checkbox" aria-label="${cell} ${mark}"${i > 1 ? " checked" : ""}></td>
  <td><div class="vis"><select aria-label="Visibility"><option>${i ? "full" : "pack"}</option></select><a href="#"><svg width="20" height="20"><use href="#i-wrench"/></svg><span> Configure</span></a></div></td>
  <td>${cell}</td><td>${mark}</td><td></td><td>${view}</td>
  <td><div class="track-row">${cell} ${mark} Histone Mods by ChIP-seq ${view} from ENCODE/Broad<svg class="caret" width="11" height="6"><use href="#i-caret"/></svg></div></td>
  <td><a href="#">Schema</a></td><td>2</td></tr>`).join("");
```
